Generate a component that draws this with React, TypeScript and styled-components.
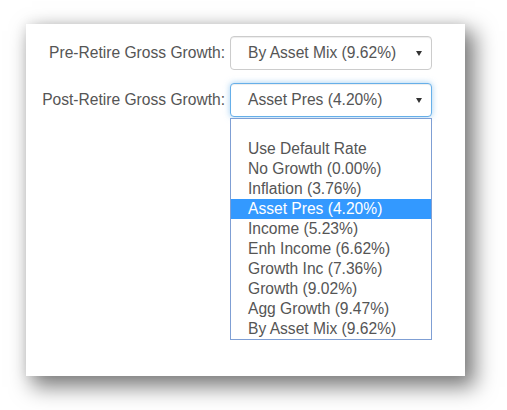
import styled, { createGlobalStyle } from 'styled-components';

const GlobalStyle = createGlobalStyle`
  html, body {
    margin: 0;
    padding: 0;
    background: #ffffff;
  }
  body {
    font-family: 'Liberation Sans', Arial, sans-serif;
  }
`;

const Page = styled.div`
  width: 507px;
  height: 410px;
  padding: 24px 0 0 26px;
  box-sizing: border-box;
`;

const Panel = styled.div`
  width: 439px;
  height: 352px;
  box-sizing: border-box;
  background: #ffffff;
  padding-top: 12px;
  display: flex;
  flex-direction: column;
  gap: 13px;
  box-shadow:
    8px 9px 20px 2px rgba(0, 0, 0, 0.5),
    0 0 12px rgba(0, 0, 0, 0.08);
`;

const FieldRow = styled.div`
  display: flex;
  align-items: center;
  gap: 5px;
  position: relative;
`;

const Label = styled.label`
  width: 199px;
  text-align: right;
  font-size: 15.6px;
  color: #555555;
  white-space: nowrap;
`;

const SelectBox = styled.div<{ $focused?: boolean }>`
  position: relative;
  width: 202px;
  height: 34px;
  box-sizing: border-box;
  display: flex;
  align-items: center;
  padding: 0 8px 0 17px;
  border: 1px solid ${({ $focused }) => ($focused ? '#66afe9' : '#cccccc')};
  border-radius: 4px;
  box-shadow: ${({ $focused }) =>
    $focused
      ? 'inset 0 1px 1px rgba(0,0,0,0.075), 0 0 6px rgba(102,175,233,0.6)'
      : 'inset 0 1px 1px rgba(0,0,0,0.075)'};
  font-size: 15.6px;
  color: #555555;
  background: #ffffff;
`;

const SelectValue = styled.span`
  flex: 1;
  white-space: nowrap;
`;

const Caret = styled.span`
  width: 0;
  height: 0;
  border-left: 3.5px solid transparent;
  border-right: 3.5px solid transparent;
  border-top: 5px solid #333333;
  margin-right: 1px;
`;

const OptionList = styled.ul`
  position: absolute;
  top: 35px;
  left: 204px;
  width: 202px;
  box-sizing: border-box;
  margin: 0;
  padding: 0;
  list-style: none;
  border: 1px solid #7f9fd4;
  background: #ffffff;
`;

const Option = styled.li<{ $selected?: boolean }>`
  height: 20px;
  line-height: 20px;
  padding-left: 17px;
  font-size: 15.6px;
  white-space: nowrap;
  color: ${({ $selected }) => ($selected ? '#ffffff' : '#555555')};
  background: ${({ $selected }) => ($selected ? '#3399ff' : 'transparent')};
`;

const options = [
  '',
  'Use Default Rate',
  'No Growth (0.00%)',
  'Inflation (3.76%)',
  'Asset Pres (4.20%)',
  'Income (5.23%)',
  'Enh Income (6.62%)',
  'Growth Inc (7.36%)',
  'Growth (9.02%)',
  'Agg Growth (9.47%)',
  'By Asset Mix (9.62%)',
];

export default function App() {
  const selected = 'Asset Pres (4.20%)';

  return (
    <>
      <GlobalStyle />
      <Page>
        <Panel>
          <FieldRow>
            <Label>Pre-Retire Gross Growth:</Label>
            <SelectBox>
              <SelectValue>By Asset Mix (9.62%)</SelectValue>
              <Caret />
            </SelectBox>
          </FieldRow>
          <FieldRow>
            <Label>Post-Retire Gross Growth:</Label>
            <SelectBox $focused>
              <SelectValue>{selected}</SelectValue>
              <Caret />
            </SelectBox>
            <OptionList>
              {options.map((opt, i) => (
                <Option key={i} $selected={opt === selected}>
                  {opt}
                </Option>
              ))}
            </OptionList>
          </FieldRow>
        </Panel>
      </Page>
    </>
  );
}
